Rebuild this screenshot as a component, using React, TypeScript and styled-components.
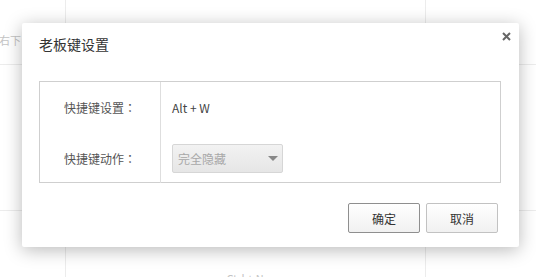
import styled, { createGlobalStyle } from "styled-components";

const GlobalStyle = createGlobalStyle`
  html, body {
    margin: 0;
    padding: 0;
    background: #fff;
  }
  body {
    font-family: "Noto Sans CJK SC", "Noto Sans", "Liberation Sans", sans-serif;
    font-size: 12px;
    color: #333;
  }
`;

export default function App() {
  return (
    <>
      <GlobalStyle />
      <Page>
        <Backdrop>
          <Cell $height={65} $pad={31}>
            <Faded>右下</Faded>
          </Cell>
          <Cell $height={65} $border />
          <Cell $height={65} />
          <Cell $height={146} />
          <Cell $height={146} $border />
          <Cell $height={146} />
          <Cell $height={80} />
          <Cell $height={80} $border $center $pad={58}>
            <Faded>Ctrl + N</Faded>
          </Cell>
          <Cell $height={80} />
        </Backdrop>
        <Dialog>
          <Header>
            <Title>老板键设置</Title>
            <Close aria-label="close">
              <svg width="9" height="9" viewBox="0 0 9 9">
                <path d="M1 1L8 8M8 1L1 8" stroke="#666" strokeWidth="2" />
              </svg>
            </Close>
          </Header>
          <Table>
            <Label>
              快捷键设置<Colon>：</Colon>
            </Label>
            <Value>Alt + W</Value>
            <Label>
              快捷键动作<Colon>：</Colon>
            </Label>
            <Value>
              <Select>
                <span>完全隐藏</span>
                <Caret />
              </Select>
            </Value>
          </Table>
          <Footer>
            <Button $primary>确定</Button>
            <Button>取消</Button>
          </Footer>
        </Dialog>
      </Page>
    </>
  );
}

const Page = styled.div`
  position: relative;
  width: 536px;
  height: 277px;
  overflow: hidden;
`;

const Backdrop = styled.div`
  display: grid;
  grid-template-columns: 66px 360px 1fr;
`;

const Cell = styled.div<{ $height: number; $border?: boolean; $center?: boolean; $pad?: number }>`
  height: ${(p) => p.$height}px;
  box-sizing: border-box;
  border-bottom: 1px solid #ececec;
  border-left: ${(p) => (p.$border ? "1px solid #ececec" : "none")};
  border-right: ${(p) => (p.$border ? "1px solid #ececec" : "none")};
  display: flex;
  align-items: flex-start;
  justify-content: ${(p) => (p.$center ? "center" : "flex-start")};
  padding-top: ${(p) => p.$pad ?? 0}px;
  margin-left: ${(p) => (p.$border ? "-1px" : "0")};
  overflow: hidden;
`;

const Faded = styled.span`
  color: #c4c4c4;
  white-space: nowrap;
  font-size: 11px;
  line-height: 18px;
  margin-left: -1px;
`;

const Dialog = styled.div`
  position: absolute;
  left: 22px;
  top: 23px;
  width: 497px;
  height: 224px;
  box-sizing: border-box;
  background: #fff;
  border-radius: 2px;
  box-shadow: 0 3px 18px rgba(0, 0, 0, 0.28);
  padding: 0 17px;
  display: flex;
  flex-direction: column;
`;

const Header = styled.div`
  height: 58px;
  display: flex;
  align-items: flex-start;
  justify-content: space-between;
`;

const Title = styled.div`
  font-size: 14px;
  color: #333;
  margin-top: 11px;
`;

const Close = styled.button`
  border: none;
  background: none;
  padding: 0;
  margin: 9px -9px 0 0;
  width: 9px;
  height: 9px;
  display: flex;
  cursor: pointer;
`;

const Table = styled.div`
  display: grid;
  grid-template-columns: 121px 1fr;
  grid-template-rows: 51px 50px;
  border: 1px solid #cfcfcf;
  height: 102px;
  box-sizing: border-box;
  margin-right: 1px;
`;

const Label = styled.div`
  border-right: 1px solid #dedede;
  display: flex;
  align-items: center;
  padding-left: 24px;
  color: #555;
  font-size: 12px;
`;

const Colon = styled.span`
  font-family: "Noto Sans CJK JP", "Noto Sans CJK SC", sans-serif;
`;

const Value = styled.div`
  display: flex;
  align-items: center;
  padding-left: 11px;
  color: #444;
  font-size: 12px;
`;

const Select = styled.div`
  width: 111px;
  height: 29px;
  box-sizing: border-box;
  border: 1px solid #d6d6d6;
  border-radius: 2px;
  background: linear-gradient(#f2f2f2, #e6e6e6);
  display: flex;
  align-items: center;
  justify-content: space-between;
  padding: 0 4px 0 5px;
  color: #a8a8a8;
  font-size: 12px;
`;

const Caret = styled.span`
  width: 0;
  height: 0;
  border-left: 5px solid transparent;
  border-right: 5px solid transparent;
  border-top: 5px solid #888;
  margin-top: 1px;
`;

const Footer = styled.div`
  display: flex;
  justify-content: flex-end;
  gap: 6px;
  margin-top: 20px;
  padding-right: 4px;
`;

const Button = styled.button<{ $primary?: boolean }>`
  width: 72px;
  height: 30px;
  box-sizing: border-box;
  border: 1px solid ${(p) => (p.$primary ? "#8f8f8f" : "#c2c2c2")};
  border-radius: 2px;
  background: linear-gradient(#ffffff, #f1f1f1);
  color: #333;
  font-family: "Noto Sans CJK SC", "Noto Sans", sans-serif;
  font-size: 12px;
  padding: 0;
  cursor: pointer;
`;
